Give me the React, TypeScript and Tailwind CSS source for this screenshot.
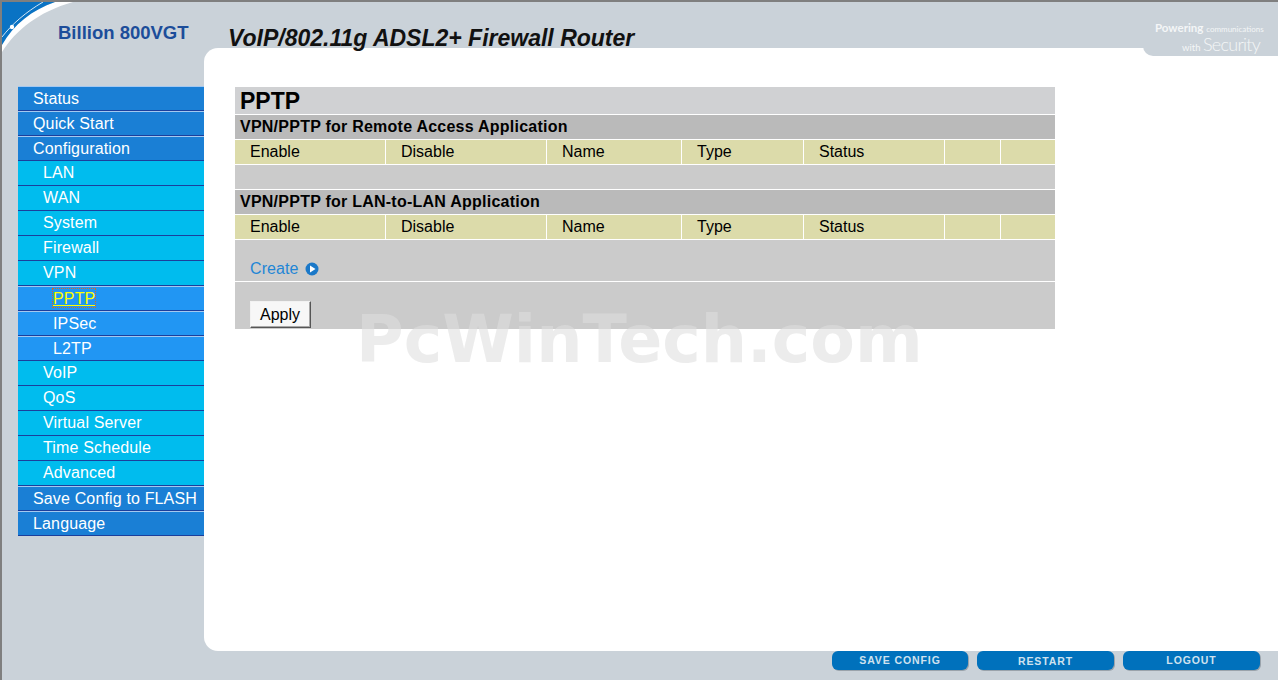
const font = { fontFamily: '"Liberation Sans", Arial, sans-serif' };

type MenuItem = { label: string; level: 0 | 1 | 2; active?: boolean };

const menu: MenuItem[] = [
  { label: "Status", level: 0 },
  { label: "Quick Start", level: 0 },
  { label: "Configuration", level: 0 },
  { label: "LAN", level: 1 },
  { label: "WAN", level: 1 },
  { label: "System", level: 1 },
  { label: "Firewall", level: 1 },
  { label: "VPN", level: 1 },
  { label: "PPTP", level: 2, active: true },
  { label: "IPSec", level: 2 },
  { label: "L2TP", level: 2 },
  { label: "VoIP", level: 1 },
  { label: "QoS", level: 1 },
  { label: "Virtual Server", level: 1 },
  { label: "Time Schedule", level: 1 },
  { label: "Advanced", level: 1 },
  { label: "Save Config to FLASH", level: 0 },
  { label: "Language", level: 0 },
];

const columns = [
  { label: "Enable", cls: "w-[150px]" },
  { label: "Disable", cls: "w-[160px]" },
  { label: "Name", cls: "w-[134px]" },
  { label: "Type", cls: "w-[121px]" },
  { label: "Status", cls: "w-[140px]" },
  { label: "", cls: "w-[55px]" },
  { label: "", cls: "flex-1" },
];

const MenuRow = ({ item }: { item: MenuItem }) => {
  if (item.level === 0) {
    return (
      <div className="h-[25px] box-border border-t border-b border-t-[#a4c8f0] border-b-[#1b3f9c] bg-[#1a7fd5] pl-[15px] leading-[24px] tracking-[0.15px] text-white whitespace-nowrap">
        {item.label}
      </div>
    );
  }
  if (item.level === 1) {
    return (
      <div className="h-[25px] box-border border-b border-b-[#1b3f9c] bg-[#00bcee] pl-[25px] leading-[24px] tracking-[0.15px] text-white">
        {item.label}
      </div>
    );
  }
  return (
    <div className="h-[25px] box-border border-t border-b border-t-[#a4c8f0] border-b-[#1b3f9c] bg-[#2196f3] pl-[35px] leading-[24px] tracking-[0.15px] text-white">
      {item.active ? (
        <a className="mt-[2px] block h-[18px] w-fit leading-[20px] text-[#ffff00] underline outline-1 outline-dotted outline-[#d9691c]">
          {item.label}
        </a>
      ) : (
        item.label
      )}
    </div>
  );
};

const HeaderCells = () => (
  <div className="flex h-6 gap-px">
    {columns.map((c, i) => (
      <div key={i} className={`${c.cls} bg-[#dcdbaa] pl-[15px] leading-6 text-black`}>
        {c.label}
      </div>
    ))}
  </div>
);

const SectionTitle = ({ children }: { children: string }) => (
  <div className="h-6 bg-[#bababa] pl-[5px] font-bold leading-6 tracking-[0.24px] text-black">{children}</div>
);

const FooterButton = ({ label, cls }: { label: string; cls: string }) => (
  <div
    className={`flex h-[19px] items-center justify-center rounded-[6px] bg-[#0071bc] text-[10.5px] font-bold tracking-[0.9px] text-[#cfe2ef] shadow-[1px_1px_0_#9aa3ab] ${cls}`}
  >
    {label}
  </div>
);

export default function App() {
  return (
    <div
      className="relative flex h-[680px] w-[1278px] flex-col overflow-hidden border-t-2 border-l-2 border-[#7f7f7f] bg-[#cad2d9] text-base"
      style={font}
    >
      {/* corner swoosh from the original header image */}
      <svg className="absolute left-0 top-0" width="80" height="60" viewBox="0 0 80 60">
        <path d="M0 50 C14 28 36 10 71 0 L53 0 C30 8 12 22 0 41 Z" fill="#ffffff" />
        <path d="M0 43 C12 22 30 8 53 0 L0 0 Z" fill="#0a73c4" />
        <path d="M0 35 C10 22 24 10 41 0" fill="none" stroke="#d5e6f4" strokeWidth="1" />
        <circle cx="10" cy="25" r="2.2" fill="#ffffff" />
      </svg>

      <header className="relative z-10 flex h-[46px] shrink-0">
        <div className="w-[202px] pl-[56px] pt-[19px] text-[18.5px] font-bold leading-[24px] text-[#1c4d9a]">
          Billion 800VGT
        </div>
        <div className="h-[50px] whitespace-nowrap pl-6 pt-[22px] text-[23px] font-bold italic leading-[28px] text-[#111]">
          VoIP/802.11g ADSL2+ Firewall Router
        </div>
      </header>

      <div className="flex h-[603px] shrink-0">
        <nav className="ml-4 mt-[38px] w-[186px] shrink-0">
          {menu.map((item) => (
            <MenuRow key={item.label} item={item} />
          ))}
        </nav>

        <main className="relative flex-1 rounded-l-[14px] bg-white pl-[31px] pt-[39px]">
          <div className="flex w-[820px] flex-col gap-px bg-white">
            <div className="h-[27px] bg-[#d0d1d3] pl-[5px] text-[23px] font-bold leading-[29px] text-black">
              PPTP
            </div>
            <SectionTitle>VPN/PPTP for Remote Access Application</SectionTitle>
            <HeaderCells />
            <div className="h-6 bg-[#cbcbcb]" />
            <SectionTitle>VPN/PPTP for LAN-to-LAN Application</SectionTitle>
            <HeaderCells />
            <div className="flex h-[41px] items-center gap-[6px] bg-[#cbcbcb] pl-[15px] pt-[16px] text-[#1f86d6]">
              <span className="leading-6 tracking-[0.1px]">Create</span>
              <svg width="14" height="14" viewBox="0 0 14 14" className="mt-px">
                <circle cx="7" cy="7" r="6.5" fill="#1a78c8" />
                <path d="M5 3.5 L10.5 7 L5 10.5 Z" fill="#ffffff" />
              </svg>
            </div>
            <div className="h-[47px] bg-[#cbcbcb] pl-[15px] pt-[19px]">
              <button className="box-border h-[27px] w-[61px] border border-t-[#f2f2f2] border-l-[#f2f2f2] border-r-[#555] border-b-[#555] bg-[#f7f7f7] pr-px text-base leading-none text-black shadow-[inset_-1px_-1px_0_#a8a8a8]">
                Apply
              </button>
            </div>
          </div>

          <div
            className="absolute left-[152px] top-[254px] whitespace-nowrap text-[65px] font-bold leading-[75px] text-[#dedede]/[0.58]"
            style={{ fontFamily: '"DejaVu Sans", sans-serif' }}
          >
            PcWinTech.com
          </div>
        </main>
      </div>

      {/* tagline tab cut into the top right of the panel */}
      <div
        className="absolute right-0 top-0 z-10 h-[54px] w-[135px] rounded-bl-[10px] bg-[#cad2d9] text-[#f4f6f7]"
        style={{ fontFamily: "Lato, sans-serif" }}
      >
        <div className="ml-[12px] mt-[21px] whitespace-nowrap text-[11.5px] font-bold leading-[10px]">
          Powering <span className="text-[8px] font-normal">communications</span>
        </div>
        <div className="ml-[39px] whitespace-nowrap text-[9.5px] font-normal leading-[20px]">
          with <span className="text-[18px] font-light tracking-[-0.7px]">Security</span>
        </div>
      </div>

      <footer className="flex flex-1 justify-end gap-[9px] pr-[18px]">
        <FooterButton label="SAVE CONFIG" cls="w-[136px]" />
        <FooterButton label="RESTART" cls="w-[137px] pt-[2px]" />
        <FooterButton label="LOGOUT" cls="w-[137px]" />
      </footer>
    </div>
  );
}
